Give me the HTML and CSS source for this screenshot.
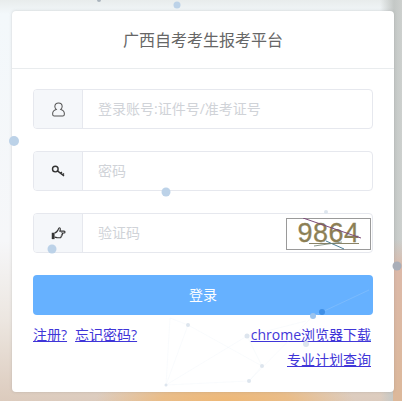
FILE: index.html
```html
<!DOCTYPE html>
<html lang="zh">
<head>
<meta charset="utf-8">
<title>广西自考考生报考平台</title>
<link rel="stylesheet" href="styles.css">
</head>
<body>
<main class="card">
  <h1 class="title">广西自考考生报考平台</h1>
  <form class="form">
    <div class="group">
      <span class="addon">
        <svg class="icon" viewBox="0 0 16 16"><path d="M8 1c-2.300 0-3.900 1.600-3.900 3.800 0 1.300.6 2.400 1.500 3.100C3.500 8.600 1.800 9.900 1.800 12v1.200c0 1 .7 1.700 1.600 1.700h9.200c.9 0 1.600-.7 1.600-1.700V12c0-2.100-1.700-3.400-3.800-4.100.9-.7 1.500-1.800 1.500-3.100C11.900 2.600 10.300 1 8 1z" fill="none" stroke="#555" stroke-width="1.100"/></svg>
      </span>
      <span class="field">登录账号:证件号/准考证号</span>
    </div>
    <div class="group">
      <span class="addon">
        <svg class="icon" viewBox="0 0 16 16"><circle cx="4.600" cy="5.400" r="3" fill="none" stroke="#333" stroke-width="1.500"/><path d="M6.900 7.400l7 5.400M10.200 9.900l1.400-1.400M12.300 11.600l1.500-1.500" fill="none" stroke="#333" stroke-width="1.600"/></svg>
      </span>
      <span class="field">密码</span>
    </div>
    <div class="group">
      <span class="addon">
        <svg class="icon" viewBox="0 0 16 16"><path d="M.8 7.200h3v6.800h-3z" fill="#333"/><path d="M3.800 7.600c1.400-.6 2.800-1.600 3.600-3.200.5-1 .7-2.600 1.700-2.600 1 0 1 1.800.4 3.600h4.400c1.400 0 1.400 2 0 2h-1.900c.8.600.5 1.700-.4 1.900.4.800 0 1.600-.8 1.700.2.900-.4 1.500-1.300 1.500H6.900c-1.200 0-2-.7-3.100-.7" fill="none" stroke="#333" stroke-width="1.200"/></svg>
      </span>
      <span class="field">验证码</span>
      <span class="captcha">
        <span class="captcha-text">9864</span>
        <svg class="captcha-noise" viewBox="0 0 85 32"><path d="M17 0L75 20" stroke="#7b4a78" stroke-width="1" fill="none"/><path d="M23 25.500H73" stroke="#8a8468" stroke-width="1" fill="none"/><path d="M40 23L58 31" stroke="#4f7f96" stroke-width="1" fill="none"/><path d="M28 28L56 24" stroke="#6f7f70" stroke-width=".8" fill="none"/></svg>
      </span>
    </div>
    <button class="submit" type="button">登录</button>
    <div class="links">
      <div class="links-left"><a href="#">注册?</a><a href="#">忘记密码?</a></div>
      <div class="links-right"><a href="#">chrome浏览器下载</a><a href="#">专业计划查询</a></div>
    </div>
  </form>
</main>
<svg class="network" viewBox="0 0 402 401">
  <g stroke="#dbe6f2" stroke-width=".5" fill="none" opacity=".35">
    <path d="M170 318L188 325L166 385L247 336L262 366L249 381L313 316L322 312L369 290M188 325L262 366M166 385L249 381M247 336L306 321M170 318L166 385"/>
  </g>
  <g fill="#bcd2e8">
    <circle cx="14" cy="141" r="5"/><circle cx="177" cy="5" r="3.500"/><circle cx="166" cy="192" r="4.500"/>
    <circle cx="52" cy="249" r="4.500"/>
  </g>
  <g fill="#dde5ee">
    <circle cx="188" cy="325" r="2"/><circle cx="166" cy="385" r="1.500"/><circle cx="247" cy="336" r="2.500"/><circle cx="262" cy="366" r="2"/><circle cx="249" cy="381" r="2"/><circle cx="326" cy="212" r="2"/><circle cx="306" cy="344" r="3"/>
  </g>
  <circle cx="397" cy="266" r="4.500" fill="#a9aeb8"/>
  <circle cx="99" cy="0" r="2" fill="#aab4bd"/>
  <circle cx="313" cy="316" r="3" fill="#9cc4ee"/>
  <circle cx="322" cy="312" r="3" fill="#3f8fe6"/>
</svg>
</body>
</html>
```
FILE: styles.css
```css
* { box-sizing: border-box; }
html, body { height: 100%; }
body {
  margin: 0;
  padding: 11px 8px 0 12px;
  overflow: hidden;
  font-family: "Open Sans", "Noto Sans CJK SC", sans-serif;
  background:
    radial-gradient(ellipse 130px 30px at 225px 401px, #eeb877 0, rgba(238, 184, 119, .75) 50%, rgba(238, 184, 119, 0) 100%),
    linear-gradient(90deg, rgba(255, 255, 255, 0) 0, rgba(255, 255, 255, 0) 380px, rgba(196, 200, 198, 1) 394px, rgba(205, 208, 206, 1) 402px),
    linear-gradient(180deg, #e8ecec 0, #f3f8fb 14px, #f6f7f9 60%, #ece6e0 80%, #dccbbd 100%);
}
body::before {
  content: "";
  position: absolute;
  right: 0;
  top: 240px;
  width: 9px;
  height: 161px;
  background: linear-gradient(180deg, rgba(220, 185, 168, 0) 0, #dcb9a8 30px, #dcb89a 100%);
}
.card {
  position: relative;
  width: 382px;
  height: 381px;
  background: #fff;
  border-radius: 4px;
  box-shadow: 0 0 3px rgba(120, 120, 120, .3);
}
.title {
  margin: 0;
  height: 58px;
  border-bottom: 1px solid #e9ecee;
  font-size: 16px;
  font-weight: 400;
  line-height: 58px;
  text-align: center;
  color: #666;
}
.form {
  display: flex;
  flex-direction: column;
  padding: 20px 21px 0;
}
.group {
  display: flex;
  height: 40px;
  margin-bottom: 22px;
  border: 1px solid #e6e8ee;
  border-radius: 4px;
  align-items: stretch;
}
.addon {
  flex: 0 0 49px;
  display: flex;
  align-items: center;
  justify-content: center;
  background: #f5f7fa;
  border-right: 1px solid #e6e8ee;
  border-radius: 3px 0 0 3px;
}
.icon { width: 15px; height: 15px; }
.field {
  flex: 1;
  padding-left: 15px;
  font-size: 14px;
  line-height: 38px;
  color: #d0d3d8;
}
.captcha {
  position: relative;
  flex: 0 0 85px;
  height: 32px;
  margin: 4px 1px 0 0;
  border: 1px solid #9a9a9a;
  text-align: center;
  background: #fff;
}
.captcha-text {
  font-family: "Liberation Sans", sans-serif;
  font-size: 27px;
  line-height: 29px;
  letter-spacing: .5px;
  color: #8c7f55;
  -webkit-text-stroke: .3px #8c7f55;
}
.captcha-noise {
  position: absolute;
  left: -1px;
  top: -1px;
  width: 85px;
  height: 32px;
}
.submit {
  height: 40px;
  padding: 0 0 2px;
  border: 0;
  border-radius: 4px;
  background: #66b1ff;
  color: #fff;
  font-family: inherit;
  font-size: 14px;
}
.links {
  display: flex;
  justify-content: space-between;
  margin-top: 9px;
  padding-right: 2px;
  font-size: 14px;
  line-height: 22px;
}
.links a { color: #3f35d8; text-decoration: underline; }
.links-left { display: flex; gap: 8px; }
.links-right {
  display: flex;
  flex-direction: column;
  align-items: flex-end;
  gap: 3px;
}
.network {
  position: absolute;
  left: 0;
  top: 0;
  width: 402px;
  height: 401px;
  pointer-events: none;
}
```
